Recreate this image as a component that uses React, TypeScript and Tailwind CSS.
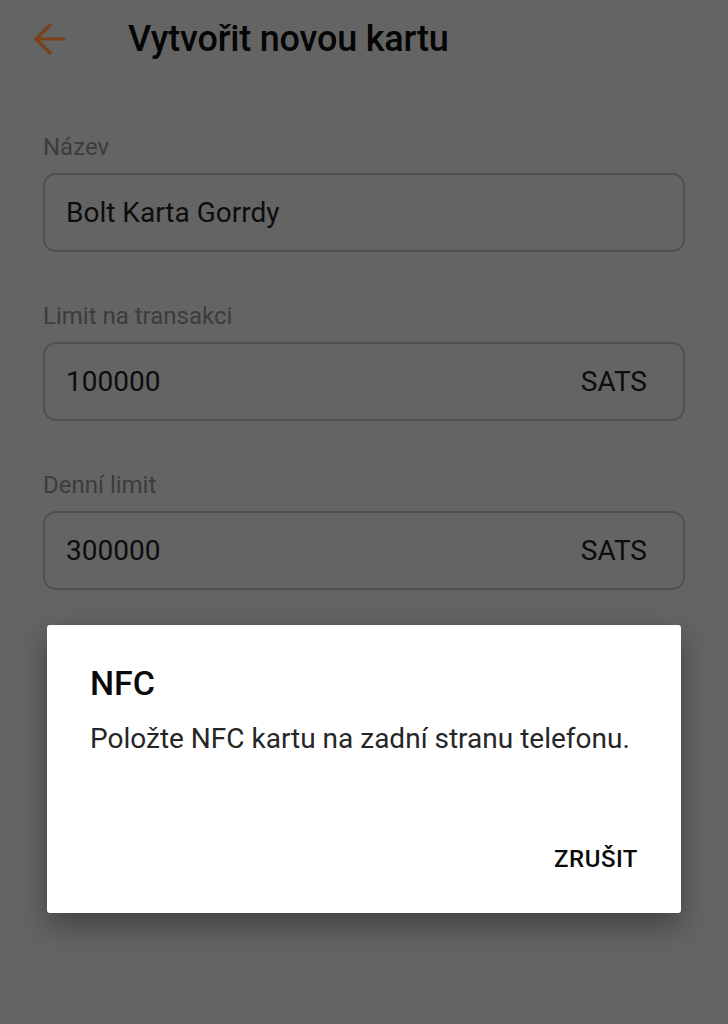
import { ArrowLeft } from "lucide-react";

const fields = [
  { label: "Název", value: "Bolt Karta Gorrdy", unit: "" },
  { label: "Limit na transakci", value: "100000", unit: "SATS" },
  { label: "Denní limit", value: "300000", unit: "SATS" },
];

export default function App() {
  return (
    <div className="relative h-[1024px] w-[728px] overflow-hidden bg-[#646464] font-['Roboto',sans-serif]">
      {/* Top bar */}
      <div className="flex h-[78px] items-center">
        <ArrowLeft className="ml-[26px] h-[48px] w-[48px] text-[#7a3f18]" strokeWidth={1.6} />
        <h1 className="ml-[54px] text-[36px] font-medium leading-none tracking-[-0.2px] text-[#050505]">
          Vytvořit novou kartu
        </h1>
      </div>

      {/* Form */}
      <div className="flex flex-col gap-[50px] px-[43px] pt-[55px]">
        {fields.map((f) => (
          <div key={f.label}>
            <div className="mb-[12px] text-[24px] leading-[28px] text-[#3c3c3c]">{f.label}</div>
            <div className="flex h-[79px] items-center justify-between rounded-[13px] border-2 border-[#505050] pl-[21px] pr-[36px]">
              <span className="text-[28px] text-[#0d0d0d]">{f.value}</span>
              {f.unit && <span className="text-[28px] text-[#0d0d0d]">{f.unit}</span>}
            </div>
          </div>
        ))}
      </div>

      {/* NFC dialog */}
      <div className="absolute left-[47px] top-[625px] flex h-[288px] w-[634px] flex-col rounded-[3px] bg-white px-[43px] shadow-[0_12px_30px_rgba(0,0,0,0.35)]">
        <div className="mt-[41px] text-[34px] font-medium leading-none text-[#0a0a0a]">NFC</div>
        <p className="mt-[25px] text-[28px] leading-none text-[#262626]">
          Položte NFC kartu na zadní stranu telefonu.
        </p>
        <div className="mt-auto mb-[42px] flex justify-end">
          <span className="text-[24px] font-medium leading-none tracking-[0.5px] text-[#0a0a0a]">ZRUŠIT</span>
        </div>
      </div>
    </div>
  );
}
